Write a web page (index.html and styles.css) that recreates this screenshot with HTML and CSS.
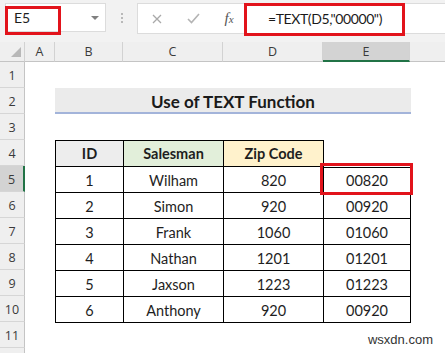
FILE: index.html
```html
<!DOCTYPE html>
<html>
  <head>
    <meta charset="utf-8">
    <title>Use of TEXT Function</title>
    <link rel="stylesheet" href="styles.css">
  </head>
  <body>
    <div class="toolbar">
      <div class="namebox">
        <span class="name">E5</span>
        <span class="drop"></span>
      </div>
      <div class="dots"><i></i><i></i><i></i></div>
      <div class="formula">
        <span class="btn">
          <svg width="10" height="10" viewBox="0 0 10 10"><path d="M1 1L9 9M9 1L1 9" stroke="#a9a9a9" stroke-width="1.3" fill="none"/></svg>
        </span>
        <span class="btn">
          <svg width="13" height="11" viewBox="0 0 13 11"><path d="M1 6L4.5 9.5L12 1" stroke="#b4b4b4" stroke-width="1.6" fill="none"/></svg>
        </span>
        <span class="btn fx">f<sub>x</sub></span>
        <span class="input">=TEXT(D5,"00000")</span>
      </div>
    </div>

    <div class="sheet">
      <div class="corner"><span class="tri"></span></div>
      <div class="colheads">
        <div class="colhead col-a">A</div>
        <div class="colhead col-b">B</div>
        <div class="colhead col-c">C</div>
        <div class="colhead col-d">D</div>
        <div class="colhead col-e sel">E</div>
        <div class="colhead col-f"></div>
      </div>
      <div class="rowheads">
        <div class="rowhead">1</div>
        <div class="rowhead">2</div>
        <div class="rowhead">3</div>
        <div class="rowhead">4</div>
        <div class="rowhead sel">5</div>
        <div class="rowhead">6</div>
        <div class="rowhead">7</div>
        <div class="rowhead">8</div>
        <div class="rowhead">9</div>
        <div class="rowhead">10</div>
        <div class="rowhead">11</div>
        <div class="rowhead last"></div>
      </div>
      <div class="cells">
        <div class="spacer"></div>
        <div class="title">Use of TEXT Function</div>
        <div class="spacer"></div>
        <div class="table">
          <div class="cell head first id">ID</div>
          <div class="cell head salesman">Salesman</div>
          <div class="cell head zip">Zip Code</div>
          <div class="blank"></div>

          <div class="cell first">1</div>
          <div class="cell">Wilham</div>
          <div class="cell">820</div>
          <div class="cell top">00820</div>

          <div class="cell first">2</div>
          <div class="cell">Simon</div>
          <div class="cell">920</div>
          <div class="cell">00920</div>

          <div class="cell first">3</div>
          <div class="cell">Frank</div>
          <div class="cell">1060</div>
          <div class="cell">01060</div>

          <div class="cell first">4</div>
          <div class="cell">Nathan</div>
          <div class="cell">1201</div>
          <div class="cell">01201</div>

          <div class="cell first">5</div>
          <div class="cell">Jaxson</div>
          <div class="cell">1223</div>
          <div class="cell">01223</div>

          <div class="cell first">6</div>
          <div class="cell">Anthony</div>
          <div class="cell">920</div>
          <div class="cell">00920</div>
        </div>
      </div>
    </div>

    <!-- red callouts drawn over the screenshot -->
    <div class="mark mark-name"></div>
    <div class="mark mark-formula"></div>
    <div class="mark mark-cell"></div>

    <div class="watermark">wsxdn.com</div>
  </body>
</html>
```

FILE: styles.css
```css
body {
  margin: 0;
  width: 445px;
  height: 353px;
  overflow: hidden;
  position: relative;
  background-color: white;
  font-family: Lato, "Open Sans", sans-serif;
  color: #1e1e1e;
}

/* formula bar strip */
.toolbar {
  display: flex;
  align-items: flex-start;
  height: 42px;
  padding-top: 3px;
  box-sizing: border-box;
  background-color: #f2f2f2;
}
.namebox {
  display: flex;
  align-items: center;
  justify-content: space-between;
  margin-left: 5px;
  width: 101px;
  height: 29px;
  padding: 0 6px 0 8px;
  box-sizing: border-box;
  background-color: white;
  border: 1px solid #dcdcdc;
  font-size: 14px;
}
.drop {
  width: 0;
  height: 0;
  border-left: 4px solid transparent;
  border-right: 4px solid transparent;
  border-top: 4px solid #808080;
}
.dots {
  width: 31px;
  height: 29px;
  display: flex;
  flex-direction: column;
  align-items: center;
  justify-content: center;
  gap: 2px;
}
.dots i {
  width: 2px;
  height: 2px;
  background-color: #b9b9b9;
}
.formula {
  flex: 1;
  display: flex;
  align-items: center;
  height: 29px;
  padding-left: 1px;
  background-color: white;
  border: 1px solid #dcdcdc;
  border-right: 0;
}
.btn {
  width: 36px;
  display: flex;
  justify-content: center;
  align-items: center;
}
.fx {
  font-family: "Liberation Serif", serif;
  font-style: italic;
  font-size: 15px;
  color: #555;
  padding-right: 4px;
}
.fx sub {
  font-size: 11px;
  vertical-align: -1px;
}
.input {
  padding-left: 17px;
  font-size: 14px;
  letter-spacing: -0.4px;
  color: #1a1a1a;
}

/* worksheet */
.sheet {
  display: grid;
  grid-template-columns: 25px 1fr;
  grid-template-rows: 20px auto;
}
.corner {
  display: flex;
  align-items: flex-end;
  justify-content: flex-end;
  padding: 0 3px 4px 0;
  background-color: #efefef;
  border-right: 1px solid #d2d2d2;
  border-bottom: 1px solid #c4c4c4;
}
.tri {
  width: 0;
  height: 0;
  border-left: 10px solid transparent;
  border-bottom: 10px solid #b8b8b8;
}
.colheads {
  display: flex;
}
.colhead {
  box-sizing: border-box;
  height: 20px;
  display: flex;
  align-items: center;
  justify-content: center;
  background-color: #efefef;
  border-right: 1px solid #d2d2d2;
  border-bottom: 1px solid #c4c4c4;
  font-family: "Open Sans", sans-serif;
  font-size: 12.5px;
  color: #3a3a3a;
}
.col-a { width: 30px; }
.col-b { width: 68px; }
.col-c { width: 100px; }
.col-d { width: 100px; }
.col-e { width: 87px; }
.col-f { flex: 1; border-right: 0; }
.colhead.sel {
  background-color: #d3d3d3;
  border-bottom: 2px solid #217346;
}
.rowheads {
  display: flex;
  flex-direction: column;
}
.rowhead {
  box-sizing: border-box;
  height: 26px;
  display: flex;
  align-items: flex-end;
  justify-content: center;
  padding-bottom: 3px;
  background-color: #efefef;
  border-right: 1px solid #c4c4c4;
  border-bottom: 1px solid #d6d6d6;
  font-family: "Open Sans", sans-serif;
  font-size: 12.5px;
  color: #3a3a3a;
}
.rowhead.last {
  height: 5px;
  padding: 0;
  border-bottom: 0;
}
.rowhead.sel {
  background-color: #d3d3d3;
  border-right: 2px solid #217346;
}
.cells {
  padding-left: 30px;
}
.spacer {
  height: 26px;
}
.title {
  width: 356px;
  height: 26px;
  box-sizing: border-box;
  display: flex;
  align-items: center;
  justify-content: center;
  padding-top: 2px;
  background-color: #ebebeb;
  border-bottom: 2px solid #a3b4da;
  font-size: 17px;
  font-weight: bold;
  color: #1a1a1a;
}
.table {
  display: grid;
  grid-template-columns: 69px 100px 100px 87px;
  grid-template-rows: 27px repeat(6, 26px);
}
.cell {
  display: flex;
  align-items: center;
  justify-content: center;
  padding-top: 2px;
  box-sizing: border-box;
  border-right: 1px solid black;
  border-bottom: 1px solid black;
  font-size: 14.5px;
}
.cell.first {
  border-left: 1px solid black;
}
.cell.head {
  border-top: 1px solid black;
  font-weight: bold;
  padding-top: 0;
}
.cell.top {
  border-top: 1px solid black;
  padding-top: 1px;
}
.id { background-color: #ededed; }
.salesman { background-color: #e2efda; }
.zip { background-color: #fff2cc; }

.mark {
  position: absolute;
  box-sizing: border-box;
  border: 3px solid #e2131b;
}
.mark-name {
  left: 5px;
  top: 6px;
  width: 56px;
  height: 29px;
}
.mark-formula {
  left: 244px;
  top: 3px;
  width: 161px;
  height: 33px;
}
.mark-cell {
  left: 320px;
  top: 163px;
  width: 93px;
  height: 32px;
}
.watermark {
  position: absolute;
  right: 12px;
  bottom: 6px;
  font-family: "Liberation Sans", Arial, sans-serif;
  font-size: 13px;
  color: #333;
}
```
